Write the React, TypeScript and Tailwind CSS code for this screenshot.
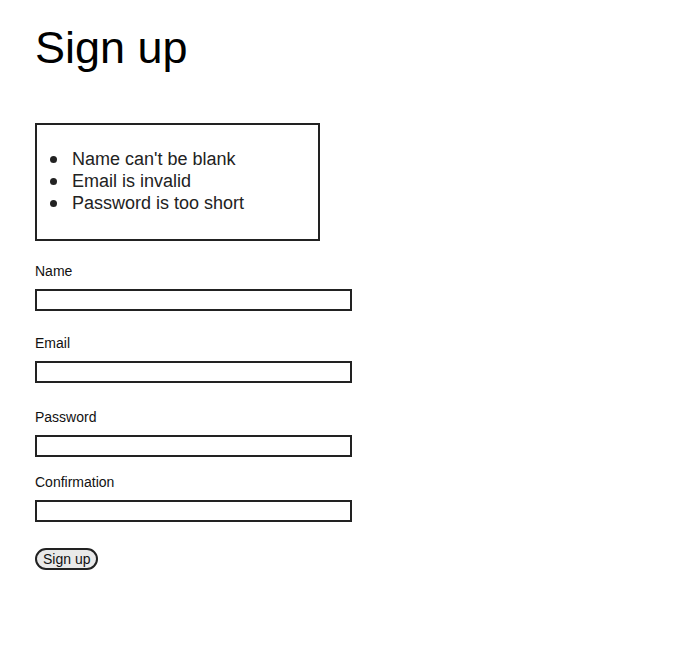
export default function App() {
  const errors = ["Name can't be blank", 'Email is invalid', 'Password is too short'];
  const fields = [
    { label: 'Name', type: 'text', mt: 'mt-0' },
    { label: 'Email', type: 'email', mt: 'mt-[24px]' },
    { label: 'Password', type: 'password', mt: 'mt-[26px]' },
    { label: 'Confirmation', type: 'password', mt: 'mt-[17px]' },
  ];

  return (
    <div className="min-h-screen bg-white pl-[35px] pt-[22px] text-black font-['Liberation_Sans',Arial,sans-serif]">
      <h1 className="text-[45px] leading-[52px]">Sign up</h1>

      <div className="mt-[49px] w-[285px] border-2 border-[#222] pt-[23px] pb-[25px] pl-[13px]">
        <ul className="text-[18px] leading-[22px] text-[#222]">
          {errors.map((e) => (
            <li key={e} className="flex items-center">
              <span className="mr-[15px] h-[7px] w-[7px] shrink-0 rounded-full bg-[#222]" />
              {e}
            </li>
          ))}
        </ul>
      </div>

      <form className="mt-[22px] flex flex-col items-start" onSubmit={(e) => e.preventDefault()}>
        {fields.map((f) => (
          <div key={f.label} className={`${f.mt} flex flex-col items-start`}>
            <label className="text-[14px] leading-[16px] text-[#111]">{f.label}</label>
            <input
              type={f.type}
              className="mt-[10px] h-[22px] w-[317px] border-2 border-[#222] bg-white px-1 text-[14px] outline-none"
            />
          </div>
        ))}
        <button
          type="submit"
          className="mt-[26px] h-[22px] rounded-full border-2 border-[#222] bg-[#e9e9e9] px-[6px] text-[14px] leading-[16px] text-[#111]"
        >
          Sign up
        </button>
      </form>
    </div>
  );
}
